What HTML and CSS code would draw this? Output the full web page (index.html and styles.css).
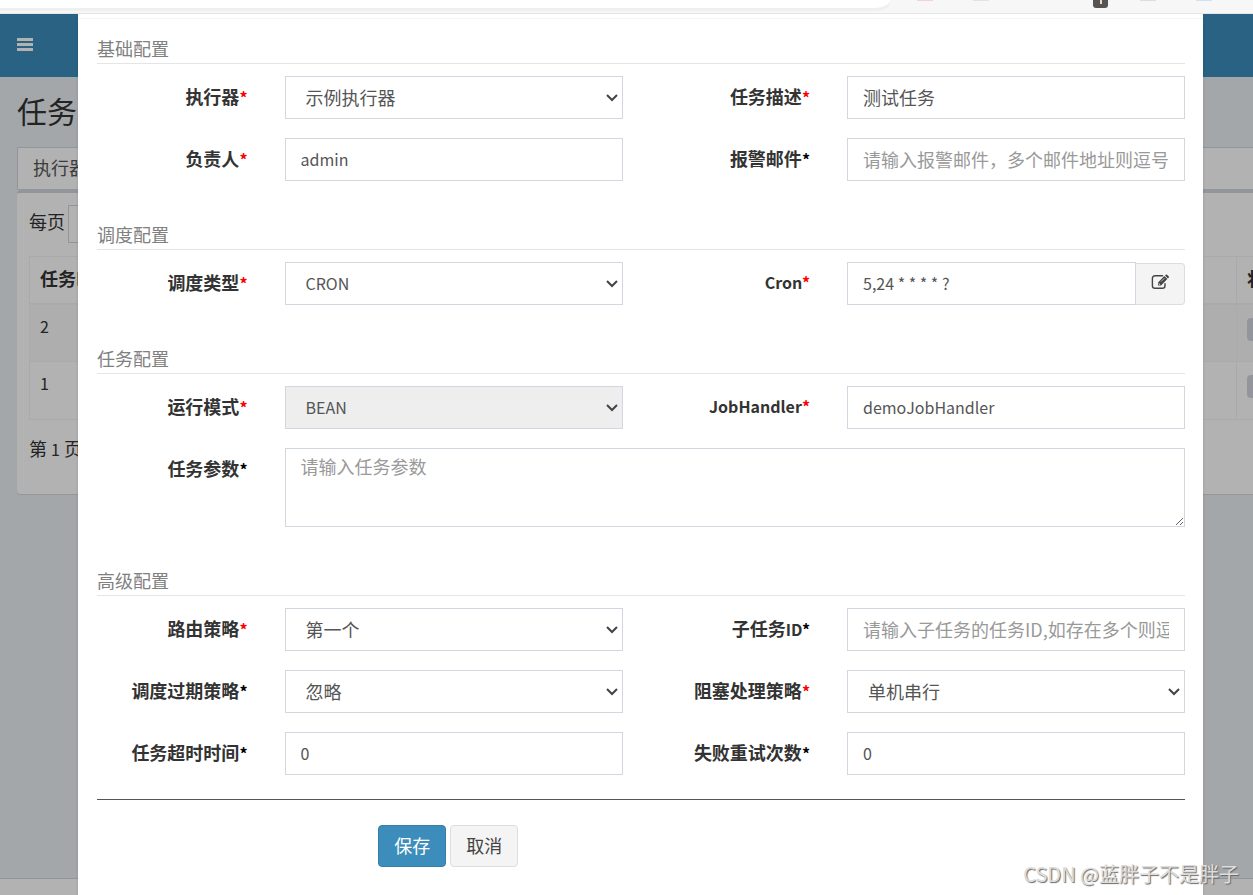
FILE: index.html
```html
<!DOCTYPE html>
<html lang="zh-CN">
<head>
<meta charset="utf-8">
<title>任务管理</title>
<link rel="stylesheet" href="styles.css">
</head>
<body>
<div class="window">
  <div class="browser-bar">
    <div class="address"></div>
    <div class="extensions">
      <i class="ext ext-pink"></i><i class="ext ext-beige"></i><i class="ext-badge"></i><i class="ext ext-grey"></i><i class="ext ext-blue"></i>
    </div>
  </div>

  <div class="stage">
    <div class="app">
      <header class="navbar">
        <button class="menu-toggle" type="button" aria-label="菜单">
          <svg width="16" height="14" viewBox="0 0 16 14"><path d="M0 1h16v3H0zM0 6h16v3H0zM0 11h16v3H0z" fill="#fff"/></svg>
        </button>
      </header>
      <main class="content">
        <h1 class="page-title">任务管理</h1>
        <div class="filter">执行器</div>
        <section class="box">
          <div class="length"><label for="page-size">每页</label><select id="page-size"><option>10</option></select></div>
          <table class="jobs">
            <thead><tr><th>任务ID</th><th class="status">状态</th></tr></thead>
            <tbody>
              <tr class="odd"><td>2</td><td class="status"><span class="tag"></span></td></tr>
              <tr><td>1</td><td class="status"><span class="tag"></span></td></tr>
            </tbody>
          </table>
          <p class="pages">第 <span class="num">1</span> 页</p>
        </section>
      </main>
      <footer class="footer"></footer>
    </div>

    <div class="overlay">
      <div class="modal" role="dialog" aria-label="任务配置">
        <div class="modal-header"></div>
        <form class="modal-body">
          <h2 class="section-title">基础配置</h2>
          <div class="row">
            <label class="label" for="group">执行器<span class="req">*</span></label>
            <div class="field"><select class="control" id="group"><option>示例执行器</option></select></div>
            <label class="label" for="desc">任务描述<span class="req">*</span></label>
            <div class="field"><input class="control" id="desc" type="text" value="测试任务"></div>
          </div>
          <div class="row">
            <label class="label" for="author">负责人<span class="req">*</span></label>
            <div class="field"><input class="control latin" id="author" type="text" value="admin"></div>
            <label class="label" for="mail">报警邮件<span class="opt">*</span></label>
            <div class="field"><input class="control" id="mail" type="text" placeholder="请输入报警邮件，多个邮件地址则逗号分隔"></div>
          </div>

          <h2 class="section-title">调度配置</h2>
          <div class="row">
            <label class="label" for="schedule">调度类型<span class="req">*</span></label>
            <div class="field"><select class="control latin" id="schedule"><option>CRON</option></select></div>
            <label class="label latin" for="cron">Cron<span class="req">*</span></label>
            <div class="field input-group">
              <input class="control latin" id="cron" type="text" value="5,24 * * * * ?">
              <button class="addon" type="button" aria-label="编辑 Cron">
                <svg width="19" height="16" viewBox="0 0 19 16" fill="none">
                  <path d="M11.500 1.700H4A2.600 2.600 0 0 0 1.400 4.300V11.700A2.600 2.600 0 0 0 4 14.300H11.400A2.600 2.600 0 0 0 14 11.700V9.800" stroke="#444" stroke-width="1.400" stroke-linecap="round"/>
                  <path d="M7 8.400 13.300 2.100 16.300 5.100 10 11.400H7z" fill="#444"/>
                  <path d="M14 1.500 14.900.7Q15.500.1 16.100.7L17.800 2.400Q18.400 3 17.800 3.600L16.900 4.400z" fill="#444"/>
                  <path d="M8 9.200V10.400H9.200M10 7.600 13.300 4.300" stroke="#f4f4f4" stroke-width=".7"/>
                </svg>
              </button>
            </div>
          </div>

          <h2 class="section-title">任务配置</h2>
          <div class="row">
            <label class="label" for="mode">运行模式<span class="req">*</span></label>
            <div class="field"><select class="control latin" id="mode" disabled><option>BEAN</option></select></div>
            <label class="label latin" for="handler">JobHandler<span class="req">*</span></label>
            <div class="field"><input class="control latin" id="handler" type="text" value="demoJobHandler"></div>
          </div>
          <div class="row">
            <label class="label" for="param">任务参数<span class="opt">*</span></label>
            <div class="field wide"><textarea class="control area" id="param" placeholder="请输入任务参数"></textarea></div>
          </div>

          <h2 class="section-title">高级配置</h2>
          <div class="row">
            <label class="label" for="route">路由策略<span class="req">*</span></label>
            <div class="field"><select class="control" id="route"><option>第一个</option></select></div>
            <label class="label" for="child">子任务<span class="id">ID</span><span class="opt">*</span></label>
            <div class="field"><input class="control" id="child" type="text" placeholder="请输入子任务的任务ID,如存在多个则逗号分隔"></div>
          </div>
          <div class="row">
            <label class="label" for="misfire">调度过期策略<span class="opt">*</span></label>
            <div class="field"><select class="control" id="misfire"><option>忽略</option></select></div>
            <label class="label" for="block">阻塞处理策略<span class="req">*</span></label>
            <div class="field"><select class="control" id="block"><option>单机串行</option></select></div>
          </div>
          <div class="row">
            <label class="label" for="timeout">任务超时时间<span class="opt">*</span></label>
            <div class="field"><input class="control latin" id="timeout" type="text" value="0"></div>
            <label class="label" for="retry">失败重试次数<span class="opt">*</span></label>
            <div class="field"><input class="control latin" id="retry" type="text" value="0"></div>
          </div>

          <hr class="rule">
          <div class="actions">
            <div class="buttons">
              <button class="btn primary" type="button">保存</button>
              <button class="btn" type="button">取消</button>
            </div>
          </div>
        </form>
      </div>
    </div>
  </div>
  <div class="watermark">CSDN @蓝胖子不是胖子</div>
</div>
</body>
</html>
```

FILE: styles.css
```css
* { box-sizing: border-box; }

body {
  margin: 0;
  font-family: "Noto Sans CJK SC", sans-serif;
  font-size: 18px;
  line-height: 26px;
  color: #333;
}

button, input, select, textarea { font: inherit; color: inherit; }

.window {
  position: relative;
  display: flex;
  flex-direction: column;
  min-height: 100vh;
  overflow: hidden;
}

/* browser strip */
.browser-bar {
  display: flex;
  height: 14px;
  background: #f7f7f7;
  border-bottom: 1px solid #e6e6e6;
}
.address {
  width: 71%;
  height: 8px;
  background: #fff;
  border-bottom-right-radius: 16px 8px;
  box-shadow: 0 3px 1px #efefef;
}
.extensions { display: flex; gap: 40px; padding-left: 27px; }
.ext { width: 16px; height: 1px; }
.ext-pink { background: #f3d3d9; }
.ext-beige { background: #e6e3dd; }
.ext-grey { background: #ddd; }
.ext-blue { background: #cfe0fa; }
.ext-badge {
  width: 15px;
  height: 8px;
  margin: 0 -8px 0 64px;
  border-radius: 0 0 3px 3px;
  background: linear-gradient(#f0d9c0, #f0d9c0) 7px 0 / 2px 4px no-repeat #555;
}

/* page behind the dialog */
.stage { position: relative; flex: 1; display: flex; flex-direction: column; }
.app { flex: 1; display: flex; flex-direction: column; background: #ebf0f3; overflow: hidden; }
.navbar { display: flex; align-items: center; height: 63px; padding: 0 0 3px 17px; background: #3c8dbc; }
.menu-toggle { display: flex; padding: 0; border: 0; background: none; }
.content { flex: 1; padding: 16px 0 0 17px; }
.page-title { margin: 0 0 20px; font-size: 30px; line-height: 34px; font-weight: 400; }
.filter {
  height: 43px;
  padding: 6px 15px;
  border: 1px solid #d2d6de;
  border-right: 0;
  background: #fff;
  color: #555;
}
.box {
  margin-right: -100px;
  padding: 12px 12px 32px;
  border-top: 3px solid #d2d6de;
  border-radius: 4px;
  background: #fff;
  box-shadow: 0 1px 1px rgba(0, 0, 0, .1);
}
.length { display: flex; gap: 3px; margin-bottom: 13px; line-height: 32px; }
.length select { width: 80px; height: 38px; padding-left: 15px; border: 1px solid #d2d6de; background: #fff; }
.jobs { width: 100%; border: 1px solid #f4f4f4; border-collapse: collapse; text-align: left; }
.jobs th, .jobs td { height: 58px; padding: 8px 10px; border: 1px solid #f4f4f4; vertical-align: top; line-height: 26px; }
.jobs th { height: 47px; border-bottom-width: 2px; }
.jobs td { font-size: 16px; }
.jobs .status { width: 104px; }
.odd { background: #f9f9f9; }
.tag { display: block; width: 60px; height: 23px; margin-top: 5px; border-radius: 4px; background: #d2d6de; }
.pages { margin: 15px 0 0; }
.num { font-size: 16px; }
.footer { height: 17px; border-top: 1px solid #d2d6de; background: #fff; }

/* dialog */
.overlay {
  position: absolute;
  inset: 0;
  display: flex;
  padding: 0 50px 0 78px;
  background: rgba(0, 0, 0, .3);
}
.modal { flex: 1; min-width: 0; background: #fff; box-shadow: 0 2px 3px rgba(0, 0, 0, .13); }
.modal-header { height: 5px; border-bottom: 1px solid #f4f4f4; }
.modal-body { padding: 18px 18px 28px 19px; }
.section-title {
  margin: 0 0 12px;
  padding-bottom: 3px;
  border-bottom: 1px solid #e5e5e5;
  font-size: 18px;
  line-height: 23px;
  font-weight: 400;
  color: #808080;
}
.row { display: grid; grid-template-columns: 2fr 4fr 2fr 4fr; margin: 0 -18px 0 -19px; }
.row + .row { margin-top: 19px; }
.row + .section-title { margin-top: 42px; }
.label { padding: 7px 18px 0 0; text-align: right; font-weight: 700; white-space: nowrap; }
.label.latin, .id { font-size: 16px; }
.req, .opt { font-size: 16px; }
.req { color: #f00; }
.opt { color: #000; }
.field { display: flex; min-width: 0; padding: 0 18px 0 19px; }
.wide { grid-column: 2 / -1; }
.control {
  flex: 1;
  min-width: 0;
  width: 100%;
  height: 43px;
  padding: 6px 15px 8px;
  border: 1px solid #d2d6de;
  border-radius: 0;
  background: #fff;
  color: #555;
}
select.control {
  appearance: none;
  padding-left: 20px;
  background: url("data:image/svg+xml,%3Csvg xmlns='http://www.w3.org/2000/svg' width='12' height='8'%3E%3Cpath d='M1 1l5 5 5-5' fill='none' stroke='%23444' stroke-width='2'/%3E%3C/svg%3E") right 4px center no-repeat #fff;
}
.control.latin { font-size: 16px; }
.control:disabled { background-color: #eee; opacity: 1; }
.control::placeholder { color: #999; }
.area { height: 79px; padding-top: 4px; resize: vertical; }
.addon {
  display: flex;
  align-items: center;
  justify-content: center;
  width: 49px;
  margin-top: 1px;
  padding: 0 0 4px;
  border: 1px solid #ddd;
  border-left: 0;
  border-radius: 0 4px 4px 0;
  background: #f4f4f4;
}
.rule { margin: 24px 0 25px; border: 0; border-top: 1px solid #555; }
.actions { display: grid; grid-template-columns: 1fr 3fr; margin: 0 -18px 0 -19px; }
.buttons { grid-column: 2; display: flex; gap: 4px; padding-left: 19px; }
.btn {
  height: 42px;
  padding: 0 15px 2px;
  border: 1px solid #ddd;
  border-radius: 4px;
  background: #f4f4f4;
  color: #444;
}
.primary { border-color: #367fa9; background: #3c8dbc; color: #fff; }

.watermark {
  position: absolute;
  right: 14px;
  bottom: 7px;
  font-size: 20px;
  line-height: 28px;
  color: #ddd;
  text-shadow: 1px 1px 1px #666;
}
```
